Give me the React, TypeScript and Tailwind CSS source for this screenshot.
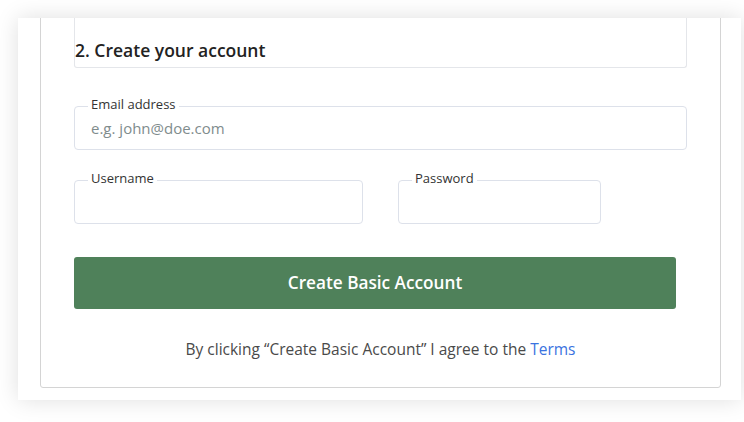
export default function App() {
  return (
    <div
      className="w-[744px] h-[422px] bg-white overflow-hidden pt-[18px] pl-[18px]"
      style={{ fontFamily: '"Open Sans", "Liberation Sans", sans-serif' }}
    >
      {/* Outer card */}
      <div className="w-[723px] bg-white overflow-hidden shadow-[0_0_22px_rgba(0,0,0,0.13)] pl-[22px] pb-[12px]">
        {/* Step box */}
        <div className="-mt-[20px] w-[681px] border border-[#d4d4d4] rounded-b-[3px] px-[33px] pb-[27px]">
          {/* Heading */}
          <div className="h-[69px] flex items-end border border-t-0 border-[#e4e6ea] rounded-b-[3px] pb-[5px]">
            <h2 className="text-[17.5px] leading-[24px] font-semibold text-[#222]">2. Create your account</h2>
          </div>

          {/* Email */}
          <div className="relative mt-[38px] h-[44px] border border-[#dde1ea] rounded-[4px]">
            <label className="absolute -top-[11px] left-[13px] bg-white px-[3px] text-[13px] leading-[16px] text-[#333]">
              Email address
            </label>
            <input
              className="w-full h-full px-[16px] text-[15px] text-[#333] placeholder:text-[#7f8c8d] outline-none bg-transparent"
              placeholder="e.g. john@doe.com"
            />
          </div>

          {/* Username / Password */}
          <div className="flex gap-[35px] mt-[30px]">
            <div className="relative w-[289px] h-[44px] border border-[#dde1ea] rounded-[4px]">
              <label className="absolute -top-[11px] left-[13px] bg-white px-[3px] text-[13px] leading-[16px] text-[#333]">
                Username
              </label>
              <input className="w-full h-full px-[16px] text-[15px] outline-none bg-transparent" />
            </div>
            <div className="relative w-[203px] h-[44px] border border-[#dde1ea] rounded-[4px]">
              <label className="absolute -top-[11px] left-[13px] bg-white px-[3px] text-[13px] leading-[16px] text-[#333]">
                Password
              </label>
              <input type="password" className="w-full h-full px-[16px] text-[15px] outline-none bg-transparent" />
            </div>
          </div>

          {/* Submit */}
          <button className="mt-[33px] w-[602px] h-[52px] bg-[#4f815a] rounded-[3px] text-white text-[17.2px] font-semibold">
            Create Basic Account
          </button>

          <p className="mt-[29px] text-center text-[15.5px] leading-[22px] text-[#4a4a4a]">
            By clicking “Create Basic Account” I agree to the{' '}
            <a className="text-[#3a73e0]">Terms</a>
          </p>
        </div>
      </div>
    </div>
  );
}
